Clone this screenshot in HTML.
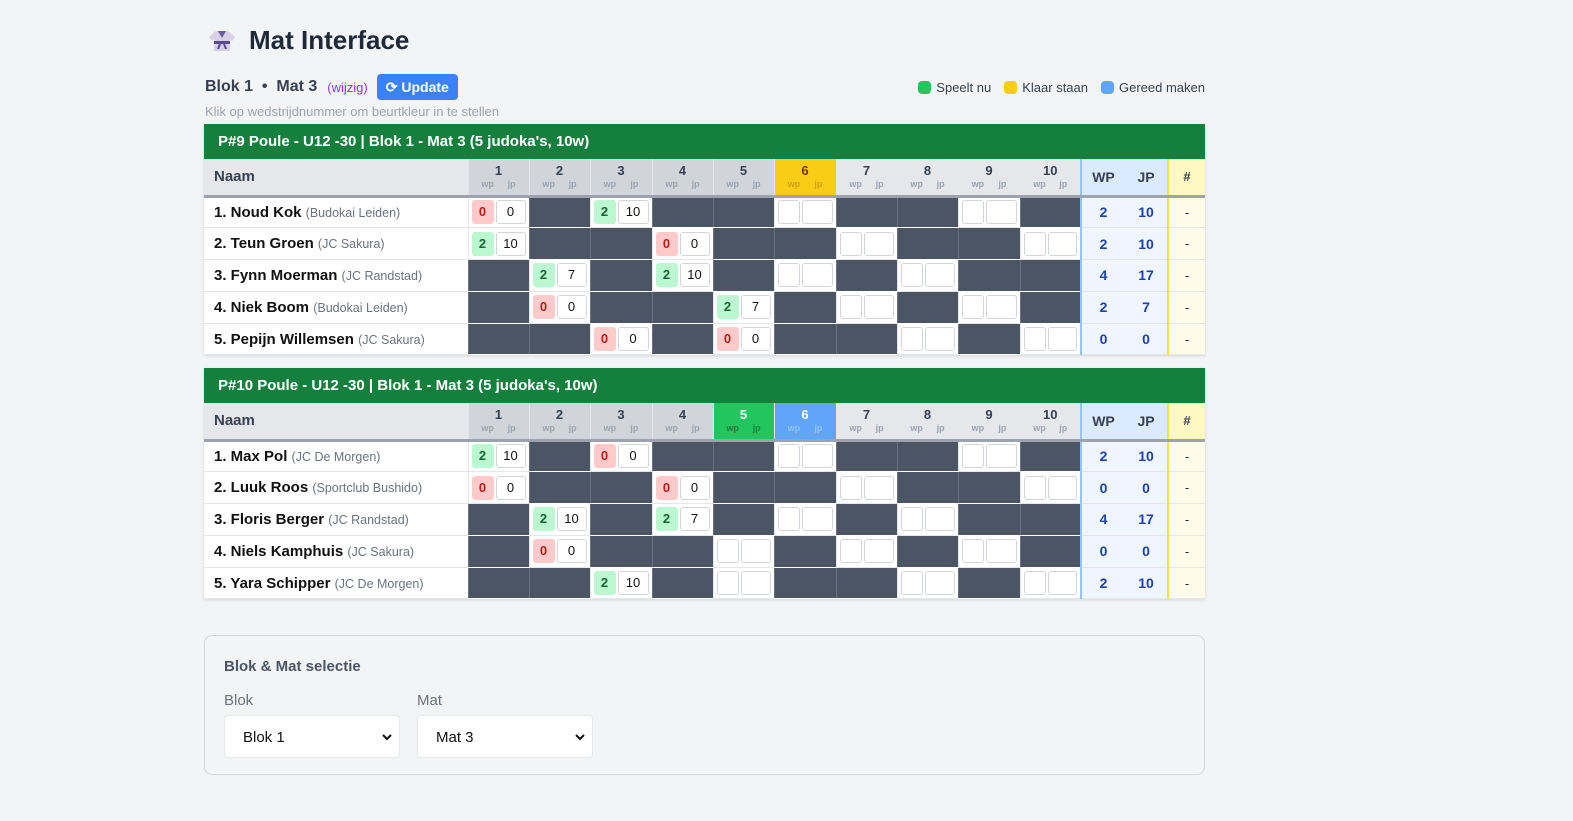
<!DOCTYPE html>
<html><head><meta charset="utf-8">
<style>
*{box-sizing:border-box;margin:0;padding:0}
body{width:1573px;height:821px;background:#f3f4f6;font-family:"Liberation Sans",sans-serif;color:#1f2937;position:relative;overflow:hidden}
.title{position:absolute;left:208px;top:25px;display:flex;align-items:center;font-size:26px;font-weight:bold;color:#1f2937}
.title svg{margin-right:13px}
.sub{position:absolute;left:205px;top:74px;height:26px;display:flex;align-items:center;font-size:16px;font-weight:bold;color:#374151}
.sub .w{font-weight:normal;color:#9333ea;font-size:13px;margin:0 9px 0 10px}
.btn{background:#3b82f6;color:#fff;font-size:14px;font-weight:bold;border-radius:4px;padding:0 9px;height:26px;display:flex;align-items:center}
.hint{position:absolute;left:205px;top:104px;font-size:13px;color:#9ca3af}
.legend{position:absolute;right:368px;top:80px;display:flex;font-size:13px;color:#374151;gap:13px}
.legend span{display:flex;align-items:center}
.legend i{display:inline-block;width:13px;height:13px;border-radius:4px;margin-right:5px}
.poule{position:absolute;left:204px;width:1001px;box-shadow:0 1px 3px rgba(0,0,0,.12);background:#fff}
.band{height:35px;background:#15803d;color:#fff;font-weight:bold;font-size:15px;padding-left:14px;line-height:35px}
table{border-collapse:collapse;table-layout:fixed;width:1001px}
th{height:37px;border-bottom:3px solid #9ca3af;font-size:13px;color:#374151;vertical-align:middle}
th.n{text-align:left;padding-left:10px;font-size:15px;background:#e5e7eb}
th .num{display:block;font-size:13px;font-weight:bold;line-height:13px}
th .wj{display:flex;justify-content:space-around;padding:0 6px;font-size:9px;color:#9ca3af;line-height:11px;margin-top:2px}
th.m{border-left:1px solid #e5e7eb}
td{height:31.8px;border-bottom:1px solid #e5e7eb;font-size:13px}
td.n{padding-left:10px;font-weight:bold;font-size:15px;color:#111;white-space:nowrap}
td.n small{font-weight:normal;font-size:12.5px;color:#6b7280}
td.d{background:#4b5563;border-left:1px solid #6b7280;border-bottom:1px solid #fff}
td.c{border-left:1px solid #e5e7eb}
.bx{display:flex;gap:2px;padding:0 3px 0 3px}
.bx b,.bx u{display:block;height:24px;border:1px solid #d1d5db;border-radius:3px;text-align:center;line-height:22px;font-size:13px;text-decoration:none;background:#fff;font-weight:normal;color:#111}
.bx b{width:22px;font-weight:bold}
.bx u{flex:1}
.bx b.g{background:#bbf7d0;color:#166534;border-color:#bbf7d0}
.bx b.r{background:#fecaca;color:#b91c1c;border-color:#fecaca}
th.wp{background:#dbeafe;border-left:2px solid #93c5fd;font-size:14px}
th.jp{background:#dbeafe;font-size:14px}
th.h{background:#fef9c3;border-left:2px solid #fde047}
td.wp{background:#eff6ff;border-left:2px solid #93c5fd;text-align:center;color:#1e40af;font-weight:bold;font-size:14px}
td.jp{background:#eff6ff;text-align:center;color:#1e40af;font-weight:bold;font-size:14px}
td.h{background:#fefce8;border-left:2px solid #fde047;text-align:center;font-size:13px}
.card{position:absolute;left:204px;top:635px;width:1001px;height:140px;border:1px solid #d1d5db;border-radius:8px;background:#f3f4f6}
.card h3{position:absolute;left:19px;top:22px;font-size:15px;color:#4b5563}
.lbl{position:absolute;top:56px;font-size:15px;color:#6b7280}
.sel{position:absolute;top:79px;width:176px;height:43px;background:#fff;border:1px solid #e5e7eb;border-radius:4px;font-size:15px;padding-left:18px;line-height:43px;color:#111}
.sel svg{position:absolute;right:6px;top:16px}
</style></head><body>
<div class="title"><svg width="28" height="24" viewBox="0 0 28 24"><path d="M8 2 L20 2 L27 8 L24 12 L22 10 L22 22 L6 22 L6 10 L4 12 L1 8 Z" fill="#d8d0e6"/><path d="M10 2 L14 9 L18 2 Z" fill="#6b5a9a"/><rect x="6" y="12" width="16" height="3" fill="#5b4a8f"/><path d="M12 15 L10 20 M16 15 L18 20" stroke="#5b4a8f" stroke-width="2"/></svg>Mat Interface</div>
<div class="sub">Blok 1&nbsp;&nbsp;•&nbsp;&nbsp;Mat 3<span class="w">(wijzig)</span><span class="btn">⟳&nbsp;Update</span></div>
<div class="hint">Klik op wedstrijdnummer om beurtkleur in te stellen</div>
<div class="legend"><span><i style="background:#22c55e"></i>Speelt nu</span><span><i style="background:#facc15"></i>Klaar staan</span><span><i style="background:#60a5fa"></i>Gereed maken</span></div>
<div class="poule" id="p1" style="top:124px"></div>
<div class="poule" id="p2" style="top:368px"></div>
<div class="card"><h3>Blok &amp; Mat selectie</h3>
<div class="lbl" style="left:19px">Blok</div><div class="lbl" style="left:212px">Mat</div>
<div class="sel" style="left:19px">Blok 1<svg width="12" height="10" viewBox="0 0 12 10"><path d="M2 3 L6 7 L10 3" stroke="#111" stroke-width="2" fill="none"/></svg></div>
<div class="sel" style="left:212px">Mat 3<svg width="12" height="10" viewBox="0 0 12 10"><path d="M2 3 L6 7 L10 3" stroke="#111" stroke-width="2" fill="none"/></svg></div>
</div>
<script>
const W=[61,61,62,61,61,62,61,61,62,61];
function build(id,title,hcol,rows){
 let h='<div class="band">'+title+'</div><table><colgroup><col style="width:264px">';
 for(let i=0;i<10;i++)h+='<col style="width:'+W[i]+'px">';
 h+='<col style="width:44px"><col style="width:43px"><col style="width:37px"></colgroup><tr><th class="n">Naam</th>';
 for(let i=1;i<=10;i++){let bg=hcol[i-1],col=(bg=='#22c55e'||bg=='#60a5fa')?'#fff':(bg=='#facc15'?'#78350f':'#374151');
  let wj=(bg=='#22c55e')?'#15803d':(bg=='#60a5fa'?'#93c5fd':(bg=='#facc15'?'#d4a017':'#9ca3af'));
  h+='<th class="m" style="background:'+bg+';color:'+col+'"><span class="num">'+i+'</span><span class="wj" style="color:'+wj+'"><span>wp</span><span>jp</span></span></th>';}
 h+='<th class="wp">WP</th><th class="jp">JP</th><th class="h">#</th></tr>';
 rows.forEach(r=>{h+='<tr><td class="n">'+r[0]+' <small>('+r[1]+')</small></td>';
  for(let i=1;i<=10;i++){let c=r[2][i];
   if(c===undefined)h+='<td class="d"></td>';
   else if(c===null)h+='<td class="c"><div class="bx"><b></b><u></u></div></td>';
   else h+='<td class="c"><div class="bx"><b class="'+(c[0]?'g':'r')+'">'+c[0]+'</b><u>'+c[1]+'</u></div></td>';}
  h+='<td class="wp">'+r[3]+'</td><td class="jp">'+r[4]+'</td><td class="h">-</td></tr>';});
 h+='</table>';document.getElementById(id).innerHTML=h;}
const G='#d1d5db',L='#e5e7eb';
build('p1',"P#9 Poule - U12 -30 | Blok 1 - Mat 3 (5 judoka's, 10w)",[G,G,G,G,G,'#facc15',L,L,L,L],[
 ['1. Noud Kok','Budokai Leiden',{1:[0,0],3:[2,10],6:null,9:null},2,10],
 ['2. Teun Groen','JC Sakura',{1:[2,10],4:[0,0],7:null,10:null},2,10],
 ['3. Fynn Moerman','JC Randstad',{2:[2,7],4:[2,10],6:null,8:null},4,17],
 ['4. Niek Boom','Budokai Leiden',{2:[0,0],5:[2,7],7:null,9:null},2,7],
 ['5. Pepijn Willemsen','JC Sakura',{3:[0,0],5:[0,0],8:null,10:null},0,0]]);
build('p2',"P#10 Poule - U12 -30 | Blok 1 - Mat 3 (5 judoka's, 10w)",[G,G,G,G,'#22c55e','#60a5fa',L,L,L,L],[
 ['1. Max Pol','JC De Morgen',{1:[2,10],3:[0,0],6:null,9:null},2,10],
 ['2. Luuk Roos','Sportclub Bushido',{1:[0,0],4:[0,0],7:null,10:null},0,0],
 ['3. Floris Berger','JC Randstad',{2:[2,10],4:[2,7],6:null,8:null},4,17],
 ['4. Niels Kamphuis','JC Sakura',{2:[0,0],5:null,7:null,9:null},0,0],
 ['5. Yara Schipper','JC De Morgen',{3:[2,10],5:null,8:null,10:null},2,10]]);
</script>
</body></html>
